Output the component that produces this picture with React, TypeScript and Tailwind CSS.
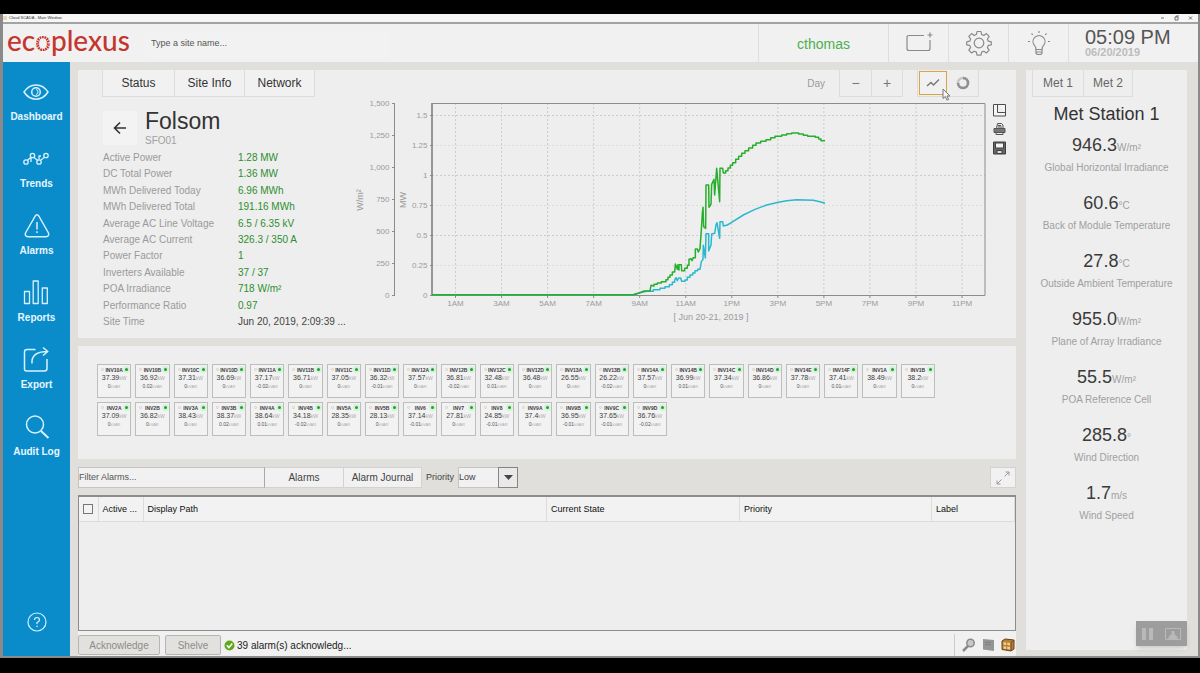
import { useState } from 'react';

const navItems = ['Dashboard', 'Trends', 'Alarms', 'Reports', 'Export', 'Audit Log'];

const stats = [
  ['Active Power', '1.28 MW'],
  ['DC Total Power', '1.36 MW'],
  ['MWh Delivered Today', '6.96 MWh'],
  ['MWh Delivered Total', '191.16 MWh'],
  ['Average AC Line Voltage', '6.5 / 6.35 kV'],
  ['Average AC Current', '326.3 / 350 A'],
  ['Power Factor', '1'],
  ['Inverters Available', '37 / 37'],
  ['POA Irradiance', '718 W/m²'],
  ['Performance Ratio', '0.97'],
  ['Site Time', 'Jun 20, 2019, 2:09:39 ...'],
];

const inverters = [
  ['INV10A', '37.39', '0'],
  ['INV10B', '36.92', '0.02'],
  ['INV10C', '37.31', '0'],
  ['INV10D', '36.69', '0'],
  ['INV11A', '37.17', '-0.02'],
  ['INV11B', '36.71', '0'],
  ['INV11C', '37.05', '0'],
  ['INV11D', '36.32', '-0.01'],
  ['INV12A', '37.57', '0'],
  ['INV12B', '36.81', '-0.02'],
  ['INV12C', '32.48', '0.01'],
  ['INV12D', '36.48', '0'],
  ['INV13A', '26.55', '0'],
  ['INV13B', '26.22', '-0.02'],
  ['INV14A', '37.57', '0'],
  ['INV14B', '36.99', '0.01'],
  ['INV14C', '37.34', '0'],
  ['INV14D', '36.86', '0'],
  ['INV14E', '37.78', '0'],
  ['INV14F', '37.41', '0.01'],
  ['INV1A', '38.49', '0'],
  ['INV1B', '38.2', '0'],
  ['INV2A', '37.09', '0'],
  ['INV2B', '36.82', '0'],
  ['INV3A', '38.43', '0'],
  ['INV3B', '38.37', '0.02'],
  ['INV4A', '38.64', '0.01'],
  ['INV4B', '34.18', '-0.02'],
  ['INV5A', '28.35', '0'],
  ['INV5B', '28.13', '0'],
  ['INV6', '37.14', '-0.01'],
  ['INV7', '27.81', '0'],
  ['INV8', '24.85', '-0.01'],
  ['INV9A', '37.4', '0'],
  ['INV9B', '36.95', '-0.01'],
  ['INV9C', '37.65', '-0.01'],
  ['INV9D', '36.76', '-0.02'],
];

const metReadings = [
  ['946.3', 'W/m²', 'Global Horizontal Irradiance'],
  ['60.6', '°C', 'Back of Module Temperature'],
  ['27.8', '°C', 'Outside Ambient Temperature'],
  ['955.0', 'W/m²', 'Plane of Array Irradiance'],
  ['55.5', 'W/m²', 'POA Reference Cell'],
  ['285.8', '°', 'Wind Direction'],
  ['1.7', 'm/s', 'Wind Speed'],
];

const hours = ['1AM', '3AM', '5AM', '7AM', '9AM', '11AM', '1PM', '3PM', '5PM', '7PM', '9PM', '11PM'];
const irradianceTicks = ['0', '250', '500', '750', '1,000', '1,250', '1,500'];
const powerTicks = ['0', '0.25', '0.5', '0.75', '1', '1.25', '1.5'];

function NavIcon({ name }: { name: string }) {
  return (
    <svg className="h-7 w-7" viewBox="0 0 28 28" fill="none" stroke="#d9f1ff" strokeWidth="1.5" strokeLinejoin="round">
      {name === 'Dashboard' && (
        <>
          <path d="M2 14C8 4.500 20 4.500 26 14C20 23.500 8 23.500 2 14Z" />
          <circle cx="14" cy="14" r="4.300" />
          <path d="M14 11.500a2 2.500 0 0 1 0 5" strokeWidth="1" />
        </>
      )}
      {name === 'Trends' && (
        <g strokeWidth="1.300">
          <circle cx="4" cy="17" r="2.200" />
          <circle cx="10.500" cy="10.500" r="2.200" />
          <circle cx="17" cy="17" r="2.200" />
          <circle cx="24" cy="10.500" r="2.200" />
          <path d="M5.500 15.300L9 12.300M12 12.500L15.500 15.300M18.500 15.300L22.500 12.300M9 17V12.500M17 14.500V11h2" />
        </g>
      )}
      {name === 'Alarms' && (
        <>
          <path d="M12.200 4Q14 1.500 15.800 4L25.500 21Q26.500 24.500 23 24.800H5Q1.500 24.500 2.500 21Z" />
          <path d="M14 10v7.500M14 19.300v1.700" />
        </>
      )}
      {name === 'Reports' && <path strokeWidth="1.300" d="M2.500 12.500h5v12h-5zM11.200 2h5v22.500h-5zM20.300 9h5v15.500h-5z" />}
      {name === 'Export' && (
        <>
          <path d="M13.500 3.500H5Q2.500 3.500 2.500 6v17q0 2 2 2h18q2.500 0 2.500-2.500V13" />
          <path d="M10 17.500V15Q11 5.500 25.500 5.500M21 1.500l4.800 4-4.800 4" />
        </>
      )}
      {name === 'Audit Log' && (
        <>
          <circle cx="12" cy="11.500" r="8.500" />
          <path d="M18 18l7.500 7" strokeWidth="2" />
        </>
      )}
    </svg>
  );
}

function HeaderIcons() {
  return (
    <>
      <button aria-label="Add screen" className="flex w-15 items-center justify-center border-l border-[#dedede]">
        <svg width="28" height="24" viewBox="0 0 28 24" fill="none" stroke="#8a8a8a" strokeWidth="1.200">
          <path d="M19 4.500H4Q2 4.500 2 6.500v11q0 2 2 2h19q2 0 2-2V9" />
          <path d="M25 1.500v5M22.500 4h5" />
        </svg>
      </button>
      <button aria-label="Settings" className="flex w-15 items-center justify-center border-l border-[#dedede]">
        <svg width="26" height="26" viewBox="0 0 26 26" fill="none" stroke="#8a8a8a" strokeWidth="1.200" strokeLinejoin="round">
          <path d="M11 1.500h4l.6 3 2.200.9 2.600-1.800 2.800 2.800-1.800 2.600.9 2.200 3 .6v3l-3 .6-.9 2.200 1.800 2.600-2.800 2.800-2.600-1.800-2.200.9-.6 3h-4l-.6-3-2.200-.9-2.600 1.800-2.800-2.800 1.800-2.600-.9-2.200-3-.6v-3l3-.6.9-2.200-1.800-2.600 2.800-2.800 2.600 1.800 2.200-.9z" />
          <circle cx="13" cy="13" r="4.800" />
        </svg>
      </button>
      <button aria-label="Lighting" className="flex w-15 items-center justify-center border-l border-[#dedede]">
        <svg width="24" height="26" viewBox="0 0 24 26" fill="none" stroke="#8a8a8a" strokeWidth="1.200">
          <path d="M9 19.500Q9 17 7.200 15.200A6 6 0 1 1 16.800 15.200Q15 17 15 19.500z" />
          <path d="M9 19.500v3.500q0 1.500 3 1.500t3-1.500v-3.500M9 22h6" />
          <path d="M12 1v2M4.500 3.500l1.300 1.300M19.500 3.500l-1.300 1.300M1 11.500h2M21 11.500h2" />
        </svg>
      </button>
    </>
  );
}

function PowerChart() {
  return (
    <svg className="w-full" viewBox="0 0 638 230" fontFamily="Liberation Sans, Arial, sans-serif" fontSize="8" fill="#9b9b9b">
      <g stroke="#cccccc" strokeDasharray="2 2">
        {hours.map((h, i) => (
          <line key={h} x1={103.500 + i * 46.050} x2={103.500 + i * 46.050} y1="5" y2="197" />
        ))}
        {powerTicks.slice(1).map((t, i) => (
          <line key={t} x1="80" x2="633" y1={167.500 - i * 30} y2={167.500 - i * 30} strokeOpacity={i % 2 ? 1 : 0.500} />
        ))}
      </g>
      <g stroke="#8c8c8c" fill="none">
        <path d="M80 5.500H633V197.500H80" />
        <path d="M80 5v193" strokeWidth="1.800" />
        <path d="M42.500 5v193" />
      </g>
      {irradianceTicks.map((t, i) => (
        <g key={t}>
          <path d={`M40 ${197.500 - i * 32}h3`} stroke="#8c8c8c" />
          <text x="37.500" y={200 - i * 32} textAnchor="end">{t}</text>
        </g>
      ))}
      {powerTicks.map((t, i) => (
        <g key={t}>
          <path d={`M78 ${197.500 - i * 30}h3`} stroke="#8c8c8c" />
          <text x="75.500" y={200 - i * 30} textAnchor="end">{t}</text>
        </g>
      ))}
      {hours.map((h, i) => (
        <g key={h}>
          <path d={`M${103.500 + i * 46.050} 197.500v2.500`} stroke="#8c8c8c" />
          <text x={103.500 + i * 46.050} y="208" textAnchor="middle">{h}</text>
        </g>
      ))}
      <text x="359" y="222" fontSize="9" textAnchor="middle">[ Jun 20-21, 2019 ]</text>
      <text transform="translate(11 102) rotate(-90)" fontSize="9" textAnchor="middle">W/m²</text>
      <text transform="translate(54 102) rotate(-90)" fontSize="9" textAnchor="middle">MW</text>
      <g transform="translate(288 -8) scale(0.33333)" fill="none" strokeWidth="4.5" strokeLinejoin="round">
        <path
          stroke="#2bb8ce"
          d="M-624 614H-20L0 608 20 604H40V599H60V595H75V590H88V584H97V577H104V570L108 563 112 572 116 564H122L125 574H135V570H142V562H150V555H158V549H165V542H173V538H180L184 515 189 508 190 466 196 504 198 431H206V483L213 465 215 432 224 430 228 405 231 398 239 445 240 395H248L250 408 262 405 275 397 310 375 345 358 380 345 415 337 440 332 470 329 520 331 540 335 555 340"
        />
        <path
          stroke="#27ae2c"
          d="M-624 614H-20L0 608 12 603H30L33 586 42 588V583H52V579H64V575H78V569H84V562H90V555H97V546H104L106 522 112 538 114 524 117 540V524H124L125 542H134V535H142V526H147V508L153 506 156 512 160 503H166V477H172L175 486 180 476 184 420 187 370 189 352 191 410 197 415 198 285H206L207 352 213 343 215 283 222 268 224 315 230 235 239 335 240 235H248L250 249H257V242H264V234H271V226H278V218H287V208H296V199H305V190H315V182H326V174H338V166H348V159H362V154H378V149H392V143H405V139H425V135H440V131H455V129H476V132H490V136H503V139H526V142H536V147H543V152H555"
        />
      </g>
    </svg>
  );
}

function InverterCard({ name, power, reactive }: { name: string; power: string; reactive: string }) {
  return (
    <div className="relative flex h-[34px] flex-col items-center border border-[#bdbdbd] bg-[#f2f2f2] pt-[2px] whitespace-nowrap">
      <span className="absolute top-[3px] left-[3px] size-[3px] rounded-full border border-[#cfcfcf]" />
      <span className="absolute top-[3px] right-[2px] size-[3px] rounded-full bg-[#259b35] ring-2 ring-[#d3f3d5]" />
      <span className="text-[5px] leading-[6px] font-bold text-[#3c3c3c]">{name}</span>
      <span className="text-[7px] leading-[10px] text-[#3c3c3c]">
        {power}
        <span className="text-[5px] text-[#aaaaaa]">kW</span>
      </span>
      <span className="text-[5px] leading-[6px] text-[#555555]">
        {reactive}
        <span className="text-[4px] text-[#aaaaaa]">kVAR</span>
      </span>
    </div>
  );
}

function SitePanel({ view, onView }: { view: string; onView: (v: string) => void }) {
  return (
    <section className="h-[268px] bg-[#eeeeee]">
      <div className="flex h-[27px] items-stretch justify-between pr-[37px] pl-6 text-xs text-[#333333]">
        <div className="flex border-r border-[#dcdcdc]">
          <button className="w-[72px] border-b border-l border-[#dcdcdc] bg-[#f1f1f1]">Status</button>
          <button className="w-[70px] border-b border-l border-[#dcdcdc] bg-[#f1f1f1]">Site Info</button>
          <button className="w-[70px] border-b border-l border-[#dcdcdc] bg-[#f1f1f1]">Network</button>
        </div>
        <div className="flex text-[#777777]">
          <span className="self-center pr-[14px] text-[10px] text-[#999999]">Day</span>
          <button className="w-8 border-b border-l border-[#dcdcdc] text-[14px] leading-none">−</button>
          <button className="w-8 border-x border-b border-[#dcdcdc] text-[14px] leading-none">+</button>
          <div className="ml-[14px] flex border border-t-0 border-[#dcdcdc]">
            <button
              aria-label="Line chart"
              onClick={() => onView('line')}
              className="relative m-px flex w-7 items-center justify-center border border-[#d9a441] bg-[#f1f1f1]"
            >
              <svg width="14" height="10" viewBox="0 0 14 10" fill="none" stroke="#777777" strokeWidth="1.400">
                <path d="M1 8l4-3.500L7.500 7 13 1.500" />
              </svg>
              <svg className="absolute top-[16px] left-[22px] z-10" width="9" height="13" viewBox="0 0 9 13" fill="#f4f4f4" stroke="#777777">
                <path d="M1 1v9.500l2.300-2 1.700 3.700 1.600-.8-1.600-3.400H8z" />
              </svg>
            </button>
            <button aria-label="Gauge" onClick={() => onView('gauge')} className="flex w-[30px] items-center justify-center">
              <svg width="14" height="14" viewBox="0 0 14 14" fill="none" strokeWidth="2.500">
                <circle cx="7" cy="7" r="5" stroke="#c6c6c6" />
                <path d="M7 2A5 5 0 1 1 2 7" stroke="#909090" />
              </svg>
            </button>
          </div>
        </div>
      </div>

      <div className="flex items-start">
        <div className="w-[274px] shrink-0 pt-[9px] pl-[25px]">
          <div className="flex h-[44px] items-center">
            <button aria-label="Back" className="flex h-[34px] w-[34px] items-center justify-center bg-[#f3f3f3]">
              <svg width="14" height="14" viewBox="0 0 14 14" fill="none" stroke="#333333" strokeWidth="1.600">
                <path d="M13 7H1.500M7 1.500L1.500 7 7 12.500" />
              </svg>
            </button>
            <div className="pl-2">
              <h1 className="text-[23px] leading-[26px] text-[#333333]">Folsom</h1>
              <p className="text-[10px] leading-[14px] text-[#a0a0a0]">SFO01</p>
            </div>
          </div>
          <dl className="flex h-[180px] flex-col justify-between text-[10px] leading-4 whitespace-nowrap">
            {stats.map(([label, value]) => (
              <div key={label} className="flex">
                <dt className="w-[135px] text-[#9a9a9a]">{label}</dt>
                <dd className={label === 'Site Time' ? 'text-[#444444]' : 'text-[#2c8f2f]'}>{value}</dd>
              </div>
            ))}
          </dl>
        </div>
        <div className="min-w-0 flex-1 pt-px">
          {view === 'line' && <PowerChart />}
        </div>
        <div className="flex w-[26px] shrink-0 flex-col items-start gap-[5px] pt-[6px] pl-[3px]">
          <button aria-label="Layout">
            <svg width="13" height="14" viewBox="0 0 13 14" fill="#f4f4f4" stroke="#4c4c4c">
              <path d="M.5 1.500h12v11.500H.500zM4.500 1.500v8h8" />
            </svg>
          </button>
          <button aria-label="Print">
            <svg width="13" height="14" viewBox="0 0 13 14" fill="#777777" stroke="#555555">
              <path d="M1 6.500h11v4H1z" />
              <path d="M3.500 6.500l1-5h4l1.500 1.500v3.500zM3 10.500h7v2H3z" fill="#e8e8e8" />
              <path d="M5 3.500h3M5 5h4" />
            </svg>
          </button>
          <button aria-label="Save">
            <svg width="13" height="14" viewBox="0 0 13 14" fill="#666666" stroke="#3f3f3f">
              <path d="M.5 1h12v12H.500z" />
              <path d="M2.500 2h8v5h-8z" fill="#f4f4f4" />
              <path d="M4 9.500h5v3H4z" fill="#dddddd" />
            </svg>
          </button>
        </div>
      </div>
    </section>
  );
}

function AlarmSection() {
  return (
    <section className="flex flex-1 flex-col">
      <div className="mb-[7px] flex h-[21px] items-stretch text-[10px] text-[#444444]">
        <input
          aria-label="Filter alarms"
          placeholder="Filter Alarms..."
          className="w-[187px] border border-[#c4c4c4] border-r-[#a8a8a8] bg-[#f1f1f1] text-[9px] placeholder:text-[#555555]"
        />
        <button className="w-[79px] border border-l-0 border-[#d2d2d2] bg-[#f1f1f1]">Alarms</button>
        <button className="w-[78px] border border-l-0 border-[#d2d2d2] bg-[#f1f1f1]">Alarm Journal</button>
        <label htmlFor="priority" className="self-center px-1 text-[9px]">Priority</label>
        <div className="relative">
          <select
            id="priority"
            defaultValue="Low"
            className="h-full w-[60px] appearance-none border border-[#c4c4c4] bg-[#f1f1f1] text-[9px] outline-none"
          >
            <option>Low</option>
            <option>Medium</option>
            <option>High</option>
          </select>
          <span className="pointer-events-none absolute inset-y-0 right-0 flex w-5 items-center justify-center border border-[#858585] bg-[#e9e9e9]">
            <svg width="9" height="5" viewBox="0 0 9 5" fill="#444444">
              <path d="M0 0h9L4.500 5z" />
            </svg>
          </span>
        </div>
        <button aria-label="Expand" className="ml-auto flex w-[26px] items-center justify-center border border-[#d2d2d2] bg-[#f1f1f1]">
          <svg width="14" height="14" viewBox="0 0 14 14" fill="none" stroke="#9a9a9a">
            <path d="M8.500 5.500L13 1M9.500 1H13v3.500M5.500 8.500L1 13M4.500 13H1V9.500" />
          </svg>
        </button>
      </div>

      <div className="min-h-[136px] flex-1 border border-t-2 border-[#8c8c8c] bg-[#eeeeee]">
        <table className="w-full table-fixed text-left text-[9px] text-[#111111]">
          <thead className="h-6 border-b border-[#dcdcdc] bg-[#f2f2f2]">
            <tr className="[&>th]:border-r [&>th]:border-[#dcdcdc] [&>th]:pt-px [&>th]:pl-1 [&>th]:font-normal">
              <th className="w-[19px]">
                <input type="checkbox" aria-label="Select all" className="block size-[10px] appearance-none border border-[#777777] bg-[#f4f4f4]" />
              </th>
              <th className="w-[45px]">Active ...</th>
              <th>Display Path</th>
              <th className="w-[193px]">Current State</th>
              <th className="w-[192px]">Priority</th>
              <th className="w-[83px]">Label</th>
            </tr>
          </thead>
        </table>
      </div>

      <footer className="flex h-[25px] items-center bg-[#f1f1f1] pt-[3px] text-[10px]">
        <button disabled className="h-5 w-[82px] rounded-xs border border-[#b5b5b5] bg-[#e2e1de] text-[#8c8c8c]">Acknowledge</button>
        <button disabled className="ml-[5px] h-5 w-[56px] rounded-xs border border-[#b5b5b5] bg-[#e2e1de] text-[#8c8c8c]">Shelve</button>
        <svg className="ml-[3px]" width="11" height="11" viewBox="0 0 11 11">
          <circle cx="5.500" cy="5.500" r="5" fill="#62a81d" />
          <path d="M2.800 5.300l2 2.200 3.500-4" fill="none" stroke="#fff" strokeWidth="1.500" />
        </svg>
        <span className="pl-[2px] text-[#222222]">39 alarm(s) acknowledg...</span>
        <div className="ml-auto flex h-full items-center gap-[6px] border-l border-[#cccccc] pr-px pl-[7px]">
          <button aria-label="Search">
            <svg width="14" height="14" viewBox="0 0 14 14" fill="#c8c8c8" stroke="#8a8a8a">
              <path d="M6 8l-5 5" strokeWidth="2.500" />
              <circle cx="8.500" cy="5" r="3.700" strokeWidth="1.500" />
            </svg>
          </button>
          <button aria-label="Notes">
            <svg width="13" height="14" viewBox="0 0 13 14" fill="#959595">
              <path d="M1 1l11 1v11L1 11.500z" />
              <path d="M3 4l6 .5M3 6.500l6 .5" stroke="#7e7e7e" />
            </svg>
          </button>
          <button aria-label="Columns">
            <svg width="14" height="14" viewBox="0 0 14 14" fill="#b5803c" stroke="#6b4216">
              <path d="M1 3l3-2 9 1v9l-3 2-9-1.500z" />
              <path d="M2.500 4.200l2.700.3v2.500l-2.700-.3zM6.300 4.600l2.700.3v2.500L6.300 7zM2.500 8.200l2.700.3V11l-2.700-.3zM6.300 8.600l2.700.3v2.500L6.300 11z" fill="#f2d08b" stroke="none" />
              <path d="M10.200 4.500V13M10 4.500l3-2" strokeWidth=".8" />
            </svg>
          </button>
        </div>
      </footer>
    </section>
  );
}

function App() {
  const [view, setView] = useState('line');

  return (
    <div className="min-h-screen bg-black pt-[14px] pb-[15px] font-['Liberation_Sans',Arial,sans-serif]">
      <div className="relative flex min-h-[644px] flex-col border-x-2 border-b-2 border-l-3 border-[#8a8a8a] bg-[#e0dfdb]">
        {/* Title bar */}
        <div className="flex h-[10px] items-center justify-between border-b-2 border-[#a3a3a3] bg-[#f6f6f6] pr-1 text-[4px] leading-[8px] text-[#333333]">
          <span className="flex items-center gap-[2px]">
            <span className="size-1 bg-[#ecd9b5]" />
            Cloud SCADA - Main Window
          </span>
          <svg width="34" height="6" viewBox="0 0 34 6" fill="none" stroke="#555555" strokeWidth=".8">
            <path d="M1 3h3M15 2h3v3h-3zM16 2V1h3M29 1.500l3 3M32 1.500l-3 3" />
          </svg>
        </div>

        <header className="flex h-[38px] items-stretch bg-[#f1f1f1]">
          <div className="flex w-[142px] items-center pb-[6px] pl-1 font-['Lato',sans-serif] text-[28px] leading-none font-medium whitespace-nowrap text-[#c5352d]">
            <span>
              eco
              {/* thin rays cut through the first "o", which sits on the same baseline */}
              <svg className="-ml-4 inline align-baseline" width="16" height="15" viewBox="0 0 16 15" fill="none">
                <circle cx="8" cy="7.500" r="6" stroke="#f1f1f1" strokeWidth="3" strokeDasharray=".7 1.656" />
              </svg>
              plexus
            </span>
          </div>
          <input
            aria-label="Site name"
            placeholder="Type a site name..."
            className="mt-[7px] mb-[5px] w-[245px] bg-[#f2f2f2] pl-[6px] text-[9px] placeholder:text-[#555555]"
          />
          <button className="ml-auto w-[130px] border-l border-[#dedede] pt-[2px] text-[14px] text-[#4caf50]">cthomas</button>
          <HeaderIcons />
          <div className="w-[130px] border-l border-[#dedede] pt-[3px] pl-4 text-[#555555]">
            <div className="text-[20px] leading-[20px]">05:09 PM</div>
            <div className="text-[11px] leading-[11px] font-bold text-[#bcbcbc]">06/20/2019</div>
          </div>
        </header>

        <div className="flex flex-1 items-stretch">
          <nav className="flex w-[67px] shrink-0 flex-col items-center gap-[22px] bg-[#0a8ccb] pt-4 text-[10px] leading-3 font-bold text-[#e6f6ff]">
            {navItems.map((item) => (
              <button key={item} className="flex flex-col items-center gap-[5px]">
                <NavIcon name={item} />
                {item}
              </button>
            ))}
            <button aria-label="Help" className="mt-auto mb-6">
              <svg width="20" height="20" viewBox="0 0 20 20" fill="none" stroke="#d9f1ff" strokeWidth="1.200">
                <circle cx="10" cy="10" r="9" />
                <path d="M7.500 8Q7.500 5.500 10 5.500T12.500 8Q12.500 9.500 10 10.500V12M10 13.500v1.500" />
              </svg>
            </button>
          </nav>

          <main className="flex min-w-0 flex-1 flex-col gap-2 pt-2 pl-2">
            <SitePanel view={view} onView={setView} />
            <section className="h-[113px] bg-[#eeeeee] pt-[18px] pr-[81px] pl-[19px]">
              <div className="grid grid-cols-[repeat(22,minmax(0,1fr))] gap-1">
                {inverters.map(([name, power, reactive]) => (
                  <InverterCard key={name} name={name} power={power} reactive={reactive} />
                ))}
              </div>
            </section>
            <AlarmSection />
          </main>

          <aside className="mt-2 mr-[11px] mb-[6px] ml-[10px] w-[161px] shrink-0 bg-[#eeeeee]">
            <div className="flex h-[27px] pl-[6px] text-xs text-[#666666]">
              <button className="w-[51px] border-b border-l border-[#dcdcdc]">Met 1</button>
              <button className="w-[50px] border-x border-b border-[#dcdcdc]">Met 2</button>
            </div>
            <h2 className="pt-[6px] text-center text-[18px] leading-[22px] text-[#333333]">Met Station 1</h2>
            <ul className="pt-[9px] text-center">
              {metReadings.map(([value, unit, label]) => (
                <li key={label} className="h-[58px] text-[10px] text-[#a0a0a0]">
                  <div className="leading-[22px]">
                    <span className="text-[18px] text-[#3a3a3a]">{value}</span>
                    {unit}
                  </div>
                  <div className="leading-[18px]">{label}</div>
                </li>
              ))}
            </ul>
          </aside>
        </div>

        {/* Playback overlay */}
        <div className="absolute right-[11px] bottom-[10px] flex h-[25px] w-[51px] items-center justify-around bg-[#9d9d9d] shadow-md">
          <button aria-label="Pause" className="flex gap-[3px]">
            <span className="h-3 w-1 bg-[#b9b9b9]" />
            <span className="h-3 w-1 bg-[#b9b9b9]" />
          </button>
          <button aria-label="Presenter view">
            <svg width="16" height="12" viewBox="0 0 16 12" fill="none" stroke="#b9b9b9">
              <path d="M.5.500h15v11H.500z" />
              <path d="M6.500 3h3v3l3 3v2h-9V9l3-3z" fill="#b9b9b9" stroke="none" />
            </svg>
          </button>
        </div>
      </div>
    </div>
  );
}

export default App;
